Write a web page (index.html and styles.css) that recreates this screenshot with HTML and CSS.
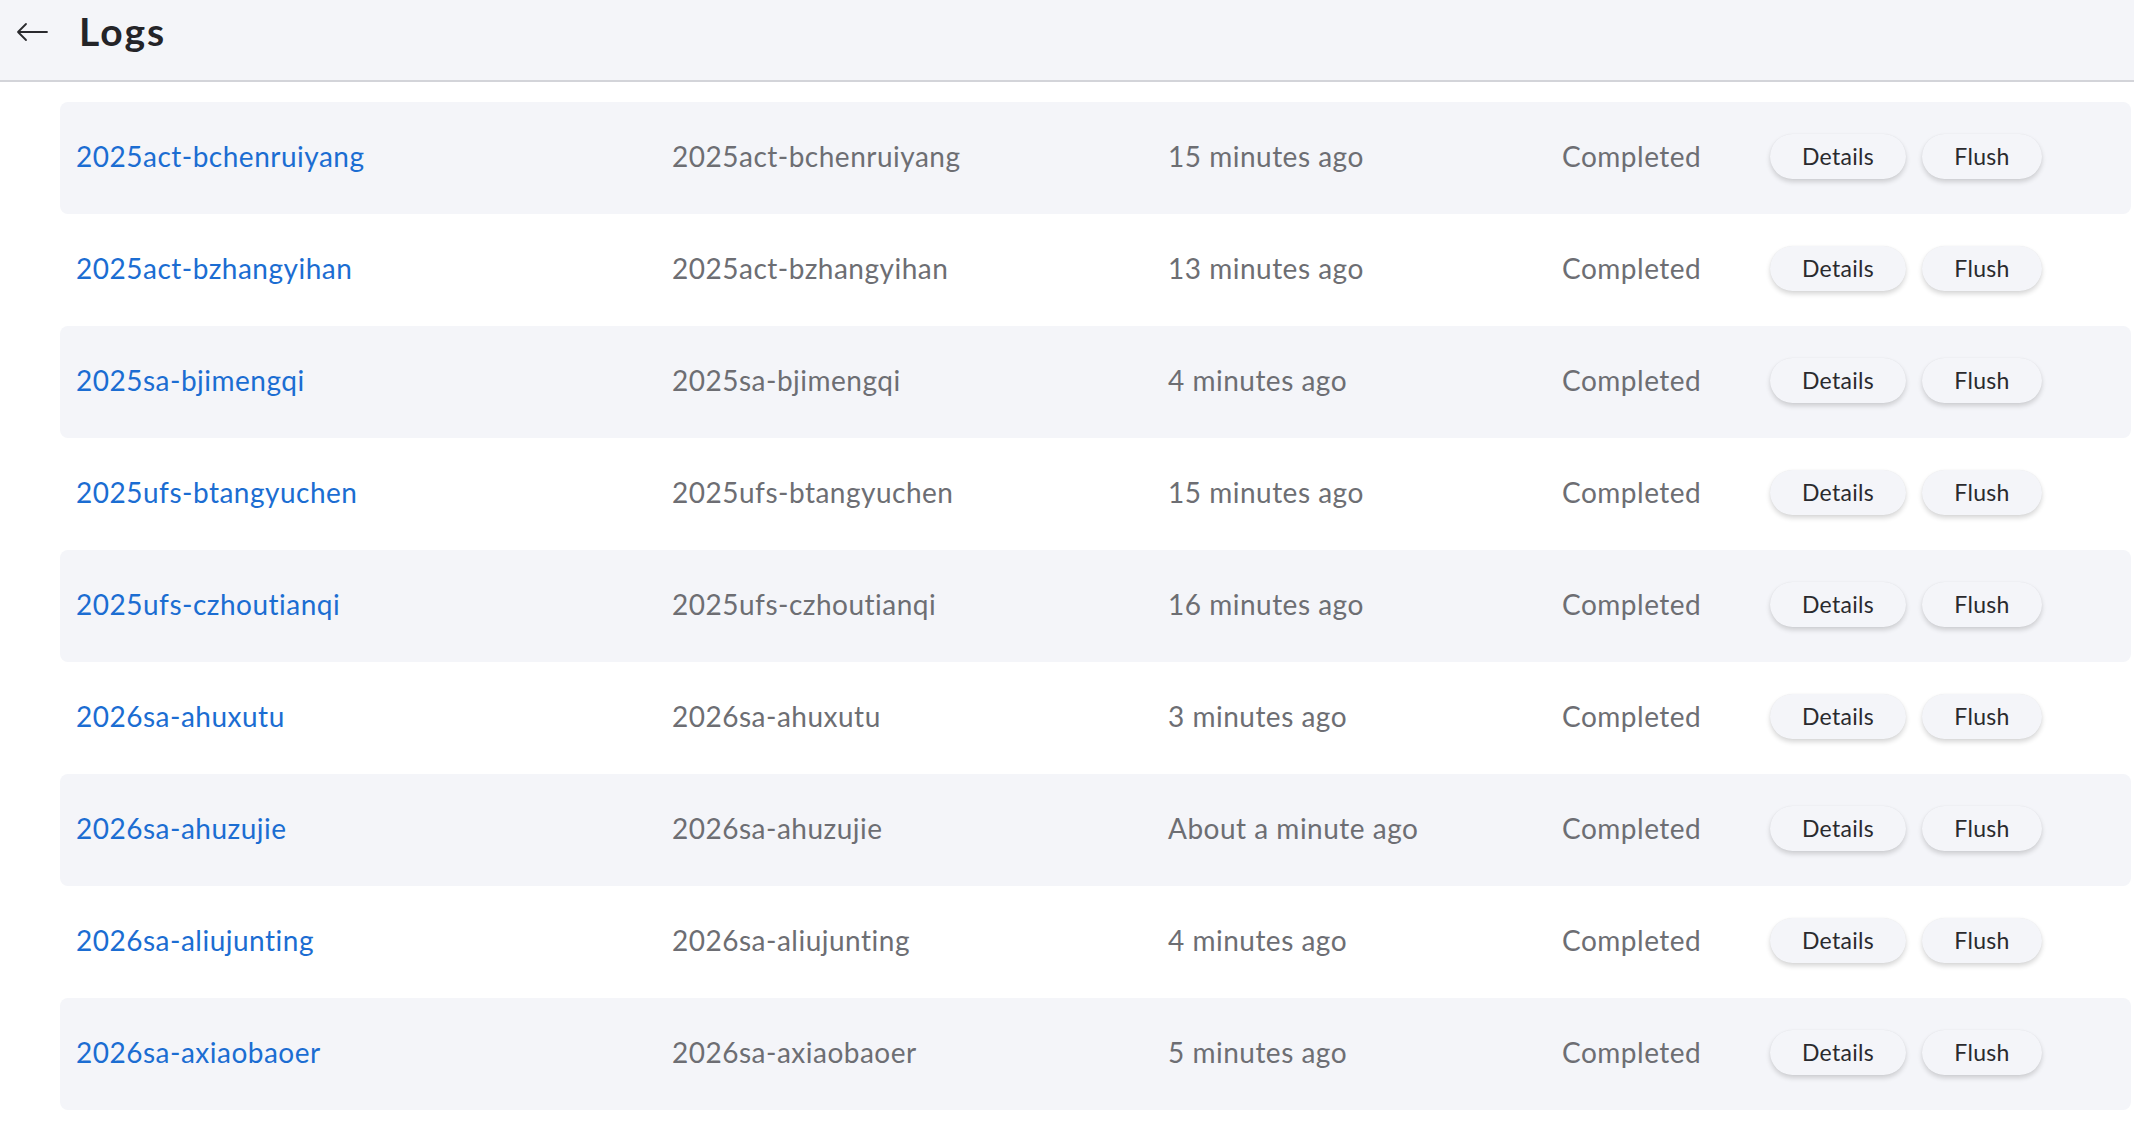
FILE: index.html
```html
<!DOCTYPE html>
<html lang="en">
<head>
<meta charset="utf-8">
<title>Logs</title>
<link rel="stylesheet" href="styles.css">
</head>
<body>
<header class="topbar">
  <button class="back" aria-label="Back">
    <svg viewBox="0 0 32 20" width="32" height="20" aria-hidden="true">
      <path d="M31 10H2M10 2L2 10L10 18" fill="none" stroke="#2a2a2e" stroke-width="1.8" stroke-linecap="round" stroke-linejoin="round"/>
    </svg>
  </button>
  <h1 class="title">Logs</h1>
</header>
<main class="list">
  <div class="row"><a class="c-name" href="#">2025act-bchenruiyang</a><span class="c-id">2025act-bchenruiyang</span><span class="c-time">15 minutes ago</span><span class="c-status">Completed</span><span class="actions"><button class="btn">Details</button><button class="btn">Flush</button></span></div>
  <div class="row"><a class="c-name" href="#">2025act-bzhangyihan</a><span class="c-id">2025act-bzhangyihan</span><span class="c-time">13 minutes ago</span><span class="c-status">Completed</span><span class="actions"><button class="btn">Details</button><button class="btn">Flush</button></span></div>
  <div class="row"><a class="c-name" href="#">2025sa-bjimengqi</a><span class="c-id">2025sa-bjimengqi</span><span class="c-time">4 minutes ago</span><span class="c-status">Completed</span><span class="actions"><button class="btn">Details</button><button class="btn">Flush</button></span></div>
  <div class="row"><a class="c-name" href="#">2025ufs-btangyuchen</a><span class="c-id">2025ufs-btangyuchen</span><span class="c-time">15 minutes ago</span><span class="c-status">Completed</span><span class="actions"><button class="btn">Details</button><button class="btn">Flush</button></span></div>
  <div class="row"><a class="c-name" href="#">2025ufs-czhoutianqi</a><span class="c-id">2025ufs-czhoutianqi</span><span class="c-time">16 minutes ago</span><span class="c-status">Completed</span><span class="actions"><button class="btn">Details</button><button class="btn">Flush</button></span></div>
  <div class="row"><a class="c-name" href="#">2026sa-ahuxutu</a><span class="c-id">2026sa-ahuxutu</span><span class="c-time">3 minutes ago</span><span class="c-status">Completed</span><span class="actions"><button class="btn">Details</button><button class="btn">Flush</button></span></div>
  <div class="row"><a class="c-name" href="#">2026sa-ahuzujie</a><span class="c-id">2026sa-ahuzujie</span><span class="c-time">About a minute ago</span><span class="c-status">Completed</span><span class="actions"><button class="btn">Details</button><button class="btn">Flush</button></span></div>
  <div class="row"><a class="c-name" href="#">2026sa-aliujunting</a><span class="c-id">2026sa-aliujunting</span><span class="c-time">4 minutes ago</span><span class="c-status">Completed</span><span class="actions"><button class="btn">Details</button><button class="btn">Flush</button></span></div>
  <div class="row"><a class="c-name" href="#">2026sa-axiaobaoer</a><span class="c-id">2026sa-axiaobaoer</span><span class="c-time">5 minutes ago</span><span class="c-status">Completed</span><span class="actions"><button class="btn">Details</button><button class="btn">Flush</button></span></div>
</main>
</body>
</html>
```
FILE: styles.css
```css
html, body {
  margin: 0;
  padding: 0;
  background: #ffffff;
  font-family: "Lato", "Open Sans", sans-serif;
}

.topbar {
  height: 82px;
  box-sizing: border-box;
  background: #f4f5f9;
  border-bottom: 2px solid #d3d4d9;
  display: flex;
  align-items: center;
  padding: 0 0 18px 16px;
}

.back {
  width: 32px;
  height: 20px;
  padding: 0;
  border: 0;
  background: none;
  display: flex;
  margin-top: 2px;
}

.title {
  margin: 0 0 0 31px;
  font-size: 39px;
  font-weight: 700;
  color: #242428;
  letter-spacing: 2px;
}

.list {
  padding: 20px 3px 0 60px;
  display: flex;
  flex-direction: column;
}

.row {
  height: 112px;
  box-sizing: border-box;
  display: grid;
  grid-template-columns: 596px 496px 394px 208px auto;
  align-items: center;
  padding: 0 0 4px 16px;
  border-radius: 8px;
  font-size: 28px;
  letter-spacing: 0.5px;
  color: #6d6e73;
}

.row:nth-child(odd) {
  background: #f4f5f9;
}

.c-name {
  color: #1b6dd2;
  text-decoration: none;
}

.actions {
  display: flex;
  gap: 16px;
}

.btn {
  height: 45px;
  padding: 0;
  border: 0;
  border-radius: 23px;
  background: #f4f5f9;
  box-shadow: 0 3px 5px rgba(0, 0, 0, 0.16), 0 0 1px rgba(0, 0, 0, 0.08);
  font-family: "Lato", "Open Sans", sans-serif;
  font-size: 23px;
  letter-spacing: 0.3px;
  color: #2a2a2e;
}

.btn:first-child {
  width: 136px;
}

.btn:last-child {
  width: 120px;
}
```
